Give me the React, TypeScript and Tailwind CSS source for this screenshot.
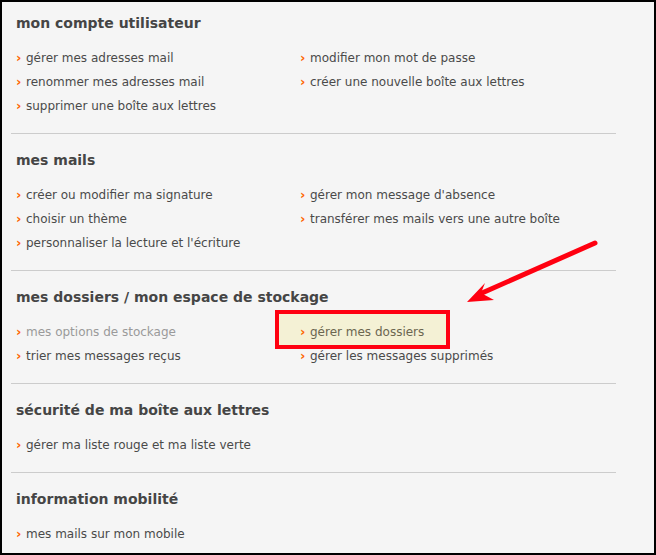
import React from "react";

type Link = { label: string; muted?: boolean; highlight?: boolean };
type Section = { title: string; left: Link[]; right: Link[] };

const sections: Section[] = [
  {
    title: "mon compte utilisateur",
    left: [
      { label: "gérer mes adresses mail" },
      { label: "renommer mes adresses mail" },
      { label: "supprimer une boîte aux lettres" },
    ],
    right: [{ label: "modifier mon mot de passe" }, { label: "créer une nouvelle boîte aux lettres" }],
  },
  {
    title: "mes mails",
    left: [
      { label: "créer ou modifier ma signature" },
      { label: "choisir un thème" },
      { label: "personnaliser la lecture et l'écriture" },
    ],
    right: [{ label: "gérer mon message d'absence" }, { label: "transférer mes mails vers une autre boîte" }],
  },
  {
    title: "mes dossiers / mon espace de stockage",
    left: [{ label: "mes options de stockage", muted: true }, { label: "trier mes messages reçus" }],
    right: [{ label: "gérer mes dossiers", highlight: true }, { label: "gérer les messages supprimés" }],
  },
  {
    title: "sécurité de ma boîte aux lettres",
    left: [{ label: "gérer ma liste rouge et ma liste verte" }],
    right: [],
  },
  {
    title: "information mobilité",
    left: [{ label: "mes mails sur mon mobile" }],
    right: [],
  },
];

const Item = ({ link }: { link: Link }) => (
  <a
    href="#"
    className={`relative flex h-6 items-center leading-6 ${
      link.muted ? "text-[#9a9a9a]" : link.highlight ? "text-[#6b6650]" : "text-[#4a4a4a]"
    }`}
  >
    {link.highlight && (
      <span className="absolute left-[-25px] top-[-10px] h-[39px] w-[175px] border-4 border-[#ff0010] bg-[#f4f1d5]" />
    )}
    <span className="relative mr-[5px] w-[5px] text-[13px] font-bold text-[#ff6600]">›</span>
    <span className="relative">{link.label}</span>
  </a>
);

export default function App() {
  return (
    <div
      className="relative h-[555px] w-[656px] overflow-hidden border-2 border-black bg-[#f5f5f5] pl-[9px]"
      style={{ fontFamily: '"DejaVu Sans", Verdana, sans-serif' }}
    >
      <div className="w-[605px]">
        {sections.map((s, i) => (
          <section
            key={s.title}
            className={`px-[5px] pb-[15px] ${i === 0 ? "pt-[11px]" : "pt-[16px]"} ${
              i < sections.length - 1 ? "border-b border-[#cccccc]" : ""
            }`}
          >
            <h2 className="h-5 text-[14px] font-bold leading-5 text-[#454545]">{s.title}</h2>
            <div className="mt-[13px] grid grid-cols-[284px_1fr] text-[12px]">
              <div>
                {s.left.map((l) => (
                  <Item key={l.label} link={l} />
                ))}
              </div>
              <div>
                {s.right.map((l) => (
                  <Item key={l.label} link={l} />
                ))}
              </div>
            </div>
          </section>
        ))}
      </div>

      <svg className="pointer-events-none absolute left-[-2px] top-[-2px]" width="656" height="555">
        <line x1="595" y1="243" x2="482" y2="293" stroke="#ff0010" strokeWidth="5" strokeLinecap="round" />
        <polygon points="467,302 485,283 481,293 494,300" fill="#ff0010" />
      </svg>
    </div>
  );
}
